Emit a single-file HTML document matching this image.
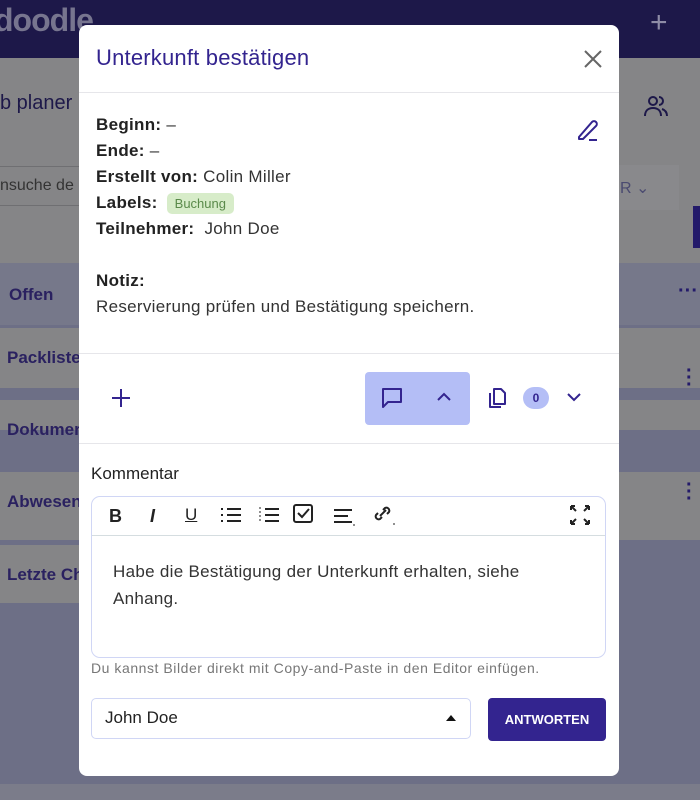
<!DOCTYPE html>
<html><head><meta charset="utf-8"><style>
*{box-sizing:border-box;margin:0;padding:0}
html,body{background:#6d6f86}
body{width:700px;height:800px;overflow:hidden;position:relative;font-family:"Liberation Sans",sans-serif}
.abs{position:absolute}
.bgt{color:#2a2160;font-weight:bold;font-size:17px}
.modal{left:79px;top:25px;width:540px;height:751px;background:#fff;border-radius:8px;overflow:hidden}
.lbl{font-weight:bold;color:#222}
.row{position:absolute;left:17px;font-size:17px;color:#333;letter-spacing:0.3px}
svg{position:absolute}
</style></head><body>
<div class="abs" style="left:0;top:0;width:700px;height:58px;background:#1d1849"></div>
<div class="abs" style="left:-6px;top:2px;font-size:32px;color:#77758f;font-weight:bold;letter-spacing:-1px">doodle</div>
<div class="abs" style="left:650px;top:6px;font-size:30px;color:#8e8ca6">+</div>
<div class="abs" style="left:0;top:58px;width:700px;height:205px;background:#858587"></div>
<div class="abs bgt" style="left:0;top:92px;font-size:20px;color:#1d1849;font-weight:normal">b planer</div>
<div class="abs" style="left:0;top:166px;width:90px;height:40px;border:1px solid #6f6f72;border-left:none;color:#333;font-size:16px;padding:10px 0 0 0">nsuche de</div>
<div class="abs" style="left:619px;top:165px;width:60px;height:45px;background:#89898c"></div>
<div class="abs" style="left:620px;top:178px;color:#4a4a70;font-size:16px">R ⌄</div>
<div class="abs" style="left:693px;top:206px;width:7px;height:42px;background:#231a6a"></div>
<div class="abs" style="left:0;top:263px;width:700px;height:62px;background:#76788a"></div>
<div class="abs bgt" style="left:9px;top:285px">Offen</div>
<div class="abs" style="left:678px;top:280px;color:#231a6a;font-size:20px;font-weight:bold">···</div>
<div class="abs" style="left:0;top:328px;width:700px;height:60px;background:#858587"></div>
<div class="abs bgt" style="left:7px;top:348px">Packliste</div>
<div class="abs" style="left:0;top:400px;width:700px;height:30px;background:#858587"></div>
<div class="abs bgt" style="left:7px;top:420px">Dokumer</div>
<div class="abs" style="left:0;top:472px;width:700px;height:68px;background:#858587"></div>
<div class="abs bgt" style="left:7px;top:492px">Abwesen</div>
<div class="abs" style="left:0;top:545px;width:80px;height:58px;background:#858587"></div>
<div class="abs bgt" style="left:7px;top:565px">Letzte Ch</div>
<div class="abs" style="left:686px;top:368px;color:#231a6a;font-size:20px;font-weight:bold;line-height:7px">·<br>·<br>·</div>
<div class="abs" style="left:686px;top:482px;color:#231a6a;font-size:20px;font-weight:bold;line-height:7px">·<br>·<br>·</div>
<div class="abs" style="left:0;top:784px;width:700px;height:16px;background:#7b7c8a"></div>
<svg style="left:642px;top:92px" width="28" height="28" viewBox="0 0 28 28" fill="none" stroke="#1d1849" stroke-width="2"><circle cx="11" cy="9" r="4"/><path d="M3 24c0-5 3-8 8-8s8 3 8 8"/><path d="M17 5a4 4 0 010 8M20 17c3 1 5 3 5 7"/></svg>

<div class="abs modal">
  <div class="abs" style="left:17px;top:20px;font-size:22px;color:#33248f;letter-spacing:0.2px">Unterkunft bestätigen</div>
  <svg style="left:503px;top:23px" width="22" height="22" viewBox="0 0 22 22" stroke="#666" stroke-width="2"><path d="M3 3L19 19M19 3L3 19"/></svg>
  <div class="abs" style="left:0;top:67px;width:540px;height:1px;background:#e6e6ea"></div>
  <svg style="left:496px;top:92px" width="26" height="26" viewBox="0 0 26 26" fill="none" stroke="#33248f" stroke-width="2" stroke-linejoin="round"><path d="M4 20L17 5a2.5 2.5 0 014 4L8 22H4z"/><path d="M14 23h8"/></svg>
  <div class="row" style="top:90px"><span class="lbl">Beginn:</span> –</div>
  <div class="row" style="top:116px"><span class="lbl">Ende:</span> –</div>
  <div class="row" style="top:142px"><span class="lbl">Erstellt von:</span> Colin Miller</div>
  <div class="row" style="top:168px"><span class="lbl">Labels:</span> <span style="display:inline-block;margin-left:4px;background:#d7ecc9;color:#5a8a4a;font-size:13px;padding:3px 8px;border-radius:5px;letter-spacing:0">Buchung</span></div>
  <div class="row" style="top:194px"><span class="lbl">Teilnehmer:</span>&nbsp; John Doe</div>
  <div class="row" style="top:246px"><span class="lbl">Notiz:</span></div>
  <div class="row" style="top:272px">Reservierung prüfen und Bestätigung speichern.</div>
  <div class="abs" style="left:0;top:328px;width:540px;height:1px;background:#e6e6ea"></div>
  <svg style="left:32px;top:363px" width="20" height="20" viewBox="0 0 20 20" stroke="#33248f" stroke-width="2"><path d="M10 1v18M1 10h18"/></svg>
  <div class="abs" style="left:286px;top:347px;width:105px;height:53px;background:#b4bef6;border-radius:4px"></div>
  <svg style="left:301px;top:361px" width="24" height="24" viewBox="0 0 24 24" fill="none" stroke="#33248f" stroke-width="2" stroke-linejoin="round"><path d="M3 3h18v13H8l-5 5z"/></svg>
  <svg style="left:357px;top:366px" width="16" height="12" viewBox="0 0 16 12" fill="none" stroke="#33248f" stroke-width="2"><path d="M2 9l6-6 6 6"/></svg>
  <svg style="left:406px;top:361px" width="24" height="24" viewBox="0 0 24 24" fill="none" stroke="#33248f" stroke-width="2" stroke-linejoin="round"><path d="M9 3h7l4 4v11H9z"/><path d="M5 7v14h11"/></svg>
  <div class="abs" style="left:444px;top:362px;width:26px;height:22px;background:#b4bef6;border-radius:11px;color:#33248f;font-size:12px;font-weight:bold;text-align:center;line-height:22px">0</div>
  <svg style="left:487px;top:366px" width="16" height="12" viewBox="0 0 16 12" fill="none" stroke="#33248f" stroke-width="2"><path d="M2 3l6 6 6-6"/></svg>
  <div class="abs" style="left:0;top:418px;width:540px;height:1px;background:#e6e6ea"></div>
  <div class="abs" style="left:12px;top:439px;font-size:17px;color:#222">Kommentar</div>
  <div class="abs" style="left:12px;top:471px;width:515px;height:162px;border:1px solid #d0d6f5;border-radius:9px"></div>
  <div class="abs" style="left:13px;top:510px;width:513px;height:1px;background:#d5dde0"></div>
  <div class="abs" style="left:30px;top:481px;font-size:18px;font-weight:bold;color:#222">B</div>
  <div class="abs" style="left:71px;top:481px;font-size:18px;font-style:italic;font-weight:bold;color:#222">I</div>
  <div class="abs" style="left:106px;top:480px;font-size:17px;text-decoration:underline;color:#222">U</div>
  <svg style="left:140px;top:480px" width="24" height="20" viewBox="0 0 24 20" stroke="#222" stroke-width="2"><path d="M8 4h14M8 10h14M8 16h14M2 4h2M2 10h2M2 16h2"/></svg>
  <svg style="left:178px;top:480px" width="24" height="20" viewBox="0 0 24 20" stroke="#222" stroke-width="2"><path d="M8 4h14M8 10h14M8 16h14"/><path d="M3 2v16" stroke-width="1" stroke-dasharray="2 2"/></svg>
  <svg style="left:213px;top:478px" width="22" height="22" viewBox="0 0 22 22" fill="none" stroke="#222" stroke-width="2"><rect x="2" y="2" width="18" height="17" rx="2"/><path d="M6 10l4 4 7-8"/></svg>
  <svg style="left:253px;top:482px" width="24" height="20" viewBox="0 0 24 20" stroke="#222" stroke-width="2"><path d="M2 3h18M2 9h14M2 15h18"/><path d="M21 18h2" stroke-width="1"/></svg>
  <svg style="left:292px;top:478px" width="26" height="24" viewBox="0 0 26 24" fill="none" stroke="#222" stroke-width="2"><path d="M9 13l6-6M7 10l-2 2a3 3 0 004 4l2-2M12 7l2-2a3 3 0 014 4l-2 2"/><path d="M22 21h2" stroke-width="1"/></svg>
  <svg style="left:490px;top:479px" width="22" height="22" viewBox="0 0 22 22" fill="none" stroke="#222" stroke-width="2"><path d="M2 2l5 5M2 2h4M2 2v4M20 2l-5 5M20 2h-4M20 2v4M2 20l5-5M2 20h4M2 20v-4M20 20l-5-5M20 20h-4M20 20v-4"/></svg>
  <div class="abs" style="left:34px;top:533px;font-size:17px;color:#333;line-height:27px;width:410px;letter-spacing:0.3px">Habe die Bestätigung der Unterkunft erhalten, siehe Anhang.</div>
  <div class="abs" style="left:12px;top:635px;font-size:14px;color:#777;letter-spacing:0.55px">Du kannst Bilder direkt mit Copy-and-Paste in den Editor einfügen.</div>
  <div class="abs" style="left:12px;top:673px;width:380px;height:41px;border:1px solid #d0d6f5;border-radius:5px"></div>
  <div class="abs" style="left:26px;top:683px;font-size:17px;color:#222">John Doe</div>
  <div class="abs" style="left:367px;top:690px;width:0;height:0;border-left:5px solid transparent;border-right:5px solid transparent;border-bottom:6px solid #111"></div>
  <div class="abs" style="left:409px;top:673px;width:118px;height:43px;background:#33248f;border-radius:4px;color:#fff;font-size:13px;font-weight:bold;text-align:center;line-height:43px">ANTWORTEN</div>
</div>
</body></html>
